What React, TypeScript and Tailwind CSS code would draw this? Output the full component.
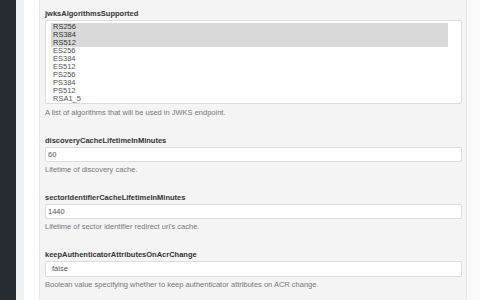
const algorithms = [
  { name: 'RS256', selected: true },
  { name: 'RS384', selected: true },
  { name: 'RS512', selected: true },
  { name: 'ES256', selected: false },
  { name: 'ES384', selected: false },
  { name: 'ES512', selected: false },
  { name: 'PS256', selected: false },
  { name: 'PS384', selected: false },
  { name: 'PS512', selected: false },
  { name: 'RSA1_5', selected: false },
]

function Label({ children }: { children: string }) {
  return <div className="h-[11px] leading-[11px] text-[7.5px] font-bold text-[#333]">{children}</div>
}

function Help({ children, first }: { children: string; first?: boolean }) {
  return (
    <div className={(first ? 'mt-[4px]' : 'mt-[3px]') + ' h-[9px] leading-[9px] text-[7.5px] text-[#777]'}>
      {children}
    </div>
  )
}

function TextInput({ value }: { value: string }) {
  return (
    <div className="mt-[1px] h-[15px] leading-[13px] border border-[#dddddd] rounded-[2px] bg-white px-[2px] text-[7.5px] text-[#555]">
      {value}
    </div>
  )
}

export default function App() {
  return (
    <div className="w-[480px] h-[300px] flex overflow-hidden bg-white font-['Liberation_Sans',Arial,sans-serif]">
      {/* sidebar edge */}
      <div className="w-[16px] shrink-0 bg-[#262c32]" />
      <div className="w-[8px] shrink-0 bg-[#eef1f4]" />
      <div className="w-[15px] shrink-0 bg-white" />

      {/* settings panel */}
      <div className="w-[428px] shrink-0 bg-[#f4f4f4] border-x border-[#e8e8e8] pl-[5px] pr-[4px] pt-[8px]">
        <Label>jwksAlgorithmsSupported</Label>
        <div className="mt-[1px] h-[84px] border border-[#dddddd] rounded-[2px] bg-white pt-[2px] pl-[5px] pr-[13px]">
          {algorithms.map((a) => (
            <div
              key={a.name}
              className={
                a.selected
                  ? 'h-[8px] leading-[8px] pl-[2px] text-[7.5px] bg-[#d9d9d9] text-[#333]'
                  : 'h-[8px] leading-[8px] pl-[2px] text-[7.5px] text-[#555]'
              }
            >
              {a.name}
            </div>
          ))}
        </div>
        <Help first>A list of algorithms that will be used in JWKS endpoint.</Help>

        <div className="mt-[18px]">
          <Label>discoveryCacheLifetimeInMinutes</Label>
          <TextInput value="60" />
          <Help>Lifetime of discovery cache.</Help>
        </div>

        <div className="mt-[18px]">
          <Label>sectorIdentifierCacheLifetimeInMinutes</Label>
          <TextInput value="1440" />
          <Help>Lifetime of sector identifier redirect uri's cache.</Help>
        </div>

        <div className="mt-[18px]">
          <Label>keepAuthenticatorAttributesOnAcrChange</Label>
          <div className="mt-[1px] h-[16px] leading-[14px] border border-[#dddddd] rounded-[2px] bg-white pl-[6px] text-[7.5px] text-[#555]">
            false
          </div>
          <Help>Boolean value specifying whether to keep authenticator attributes on ACR change.</Help>
        </div>
      </div>

      <div className="flex-1 bg-[#fafafa]" />
    </div>
  )
}
